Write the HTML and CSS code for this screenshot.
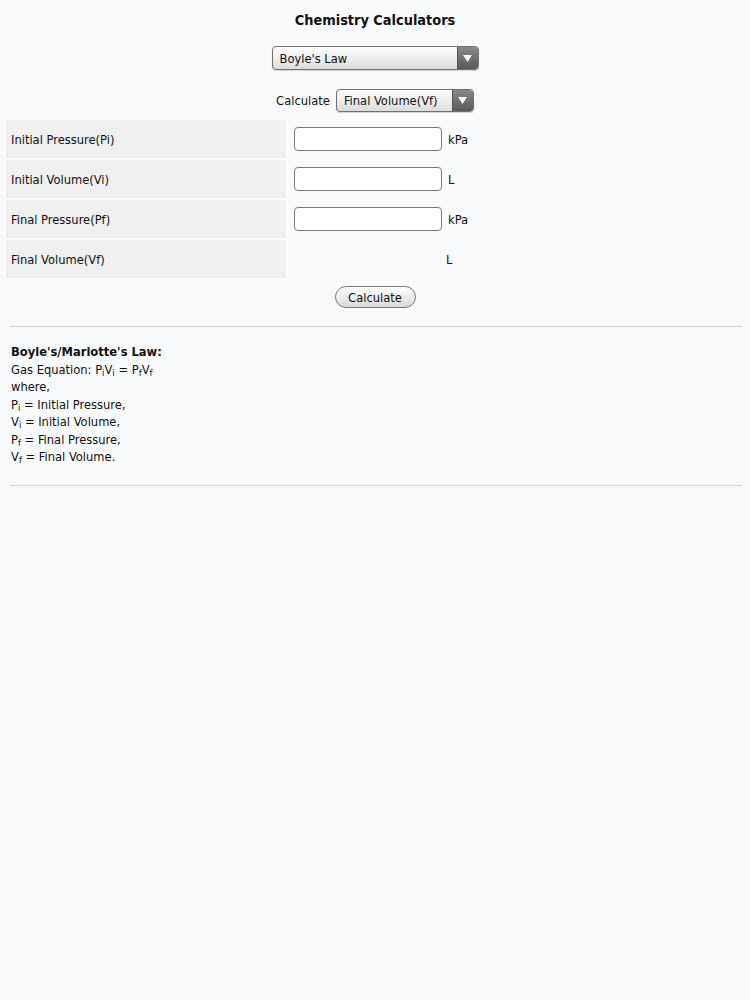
FILE: index.html
```html
<!DOCTYPE html>
<html>
<head>
<meta charset="utf-8">
<link rel="stylesheet" href="styles.css">
</head>
<body>
<div class="page">
  <h1 class="title">Chemistry Calculators</h1>
  <div class="center-row first">
    <div class="select wide"><span class="select-text">Boyle's Law</span><span class="select-arrow"><svg width="9" height="7" viewBox="0 0 10 8"><path d="M0 0 L10 0 L5 8 Z" fill="#fff"/></svg></span></div>
  </div>
  <div class="center-row second">
    <span class="calc-label">Calculate</span>
    <div class="select narrow"><span class="select-text">Final Volume(Vf)</span><span class="select-arrow"><svg width="9" height="7" viewBox="0 0 10 8"><path d="M0 0 L10 0 L5 8 Z" fill="#fff"/></svg></span></div>
  </div>
  <table class="calc-table">
    <tr>
      <td class="label">Initial Pressure(Pi)</td>
      <td class="value"><span class="input"></span><span class="unit">kPa</span></td>
    </tr>
    <tr>
      <td class="label">Initial Volume(Vi)</td>
      <td class="value"><span class="input"></span><span class="unit">L</span></td>
    </tr>
    <tr>
      <td class="label">Final Pressure(Pf)</td>
      <td class="value"><span class="input"></span><span class="unit">kPa</span></td>
    </tr>
    <tr>
      <td class="label">Final Volume(Vf)</td>
      <td class="value"><span class="result"></span><span class="unit result-unit">L</span></td>
    </tr>
  </table>
  <div class="center-row button-row">
    <span class="button">Calculate</span>
  </div>
  <div class="rule"></div>
  <div class="info">
    <div class="info-title">Boyle's/Mariotte's Law:</div>
    <div>Gas Equation: P<sub>i</sub>V<sub>i</sub> = P<sub>f</sub>V<sub>f</sub></div>
    <div>where,</div>
    <div>P<sub>i</sub> = Initial Pressure,</div>
    <div>V<sub>i</sub> = Initial Volume,</div>
    <div>P<sub>f</sub> = Final Pressure,</div>
    <div>V<sub>f</sub> = Final Volume.</div>
  </div>
  <div class="rule"></div>
</div>
</body>
</html>
```
FILE: styles.css
```css
html, body {
  margin: 0;
  padding: 0;
  background: #f9fafc;
}
body {
  font-family: "DejaVu Sans Condensed", "DejaVu Sans", sans-serif;
  font-size: 12.8px;
  color: #111;
}
.page {
  padding: 0 6px;
}
.title {
  margin: 0;
  padding-top: 11px;
  text-align: center;
  font-size: 14.4px;
  font-weight: bold;
  line-height: 18px;
  color: #111;
}
.center-row {
  display: flex;
  justify-content: center;
  align-items: center;
}
.first {
  margin-top: 17px;
}
.second {
  margin-top: 19px;
  gap: 6px;
}
.select {
  display: flex;
  align-items: stretch;
  box-sizing: border-box;
  border: 1px solid #6f6f6f;
  border-radius: 4px;
  background: linear-gradient(#ffffff, #dcdcdc);
  overflow: hidden;
  box-shadow: 0 1px 1px rgba(0,0,0,0.15);
}
.wide {
  width: 207px;
  height: 24px;
}
.narrow {
  width: 138px;
  height: 23px;
}
.select-text {
  flex: 1;
  display: flex;
  align-items: center;
  padding-left: 7px;
  font-size: 12.8px;
}
.select-arrow {
  width: 20px;
  display: flex;
  align-items: center;
  justify-content: center;
  background: linear-gradient(#8a8a8a, #595959);
  border-left: 1px solid #555;
}
.calc-label {
  font-size: 12.8px;
}
.calc-table {
  margin-top: 6px;
  width: 100%;
  border-collapse: separate;
  border-spacing: 0 2px;
}
.calc-table td {
  height: 38px;
  padding: 0;
}
.label {
  width: 280px;
  background: #f0f0f1;
  padding-left: 5px !important;
  box-sizing: border-box;
}
.value {
  padding-left: 8px !important;
}
.value > span {
  vertical-align: middle;
}
.input {
  display: inline-block;
  box-sizing: border-box;
  width: 148px;
  height: 24px;
  background: #fff;
  border: 1px solid #7a7a7a;
  border-radius: 4px;
}
.result {
  display: inline-block;
  width: 152px;
}
.unit {
  margin-left: 6px;
}
.result-unit {
  margin-left: 0;
}
.button-row {
  margin-top: 6px;
}
.button {
  display: inline-flex;
  align-items: center;
  justify-content: center;
  box-sizing: border-box;
  width: 81px;
  height: 22px;
  border: 1px solid #7a7a7a;
  border-radius: 11px;
  background: linear-gradient(#ffffff, #d8d8d8);
  font-size: 12.8px;
}
.rule {
  margin: 18px 2px 0 4px;
  height: 1px;
  background: #d4d4d6;
}
.info {
  padding: 16px 0 1px 5px;
  line-height: 17.5px;
}
.info-title {
  font-weight: bold;
}
.info sub {
  font-size: 9.5px;
  vertical-align: -2px;
  line-height: 0;
}
```
